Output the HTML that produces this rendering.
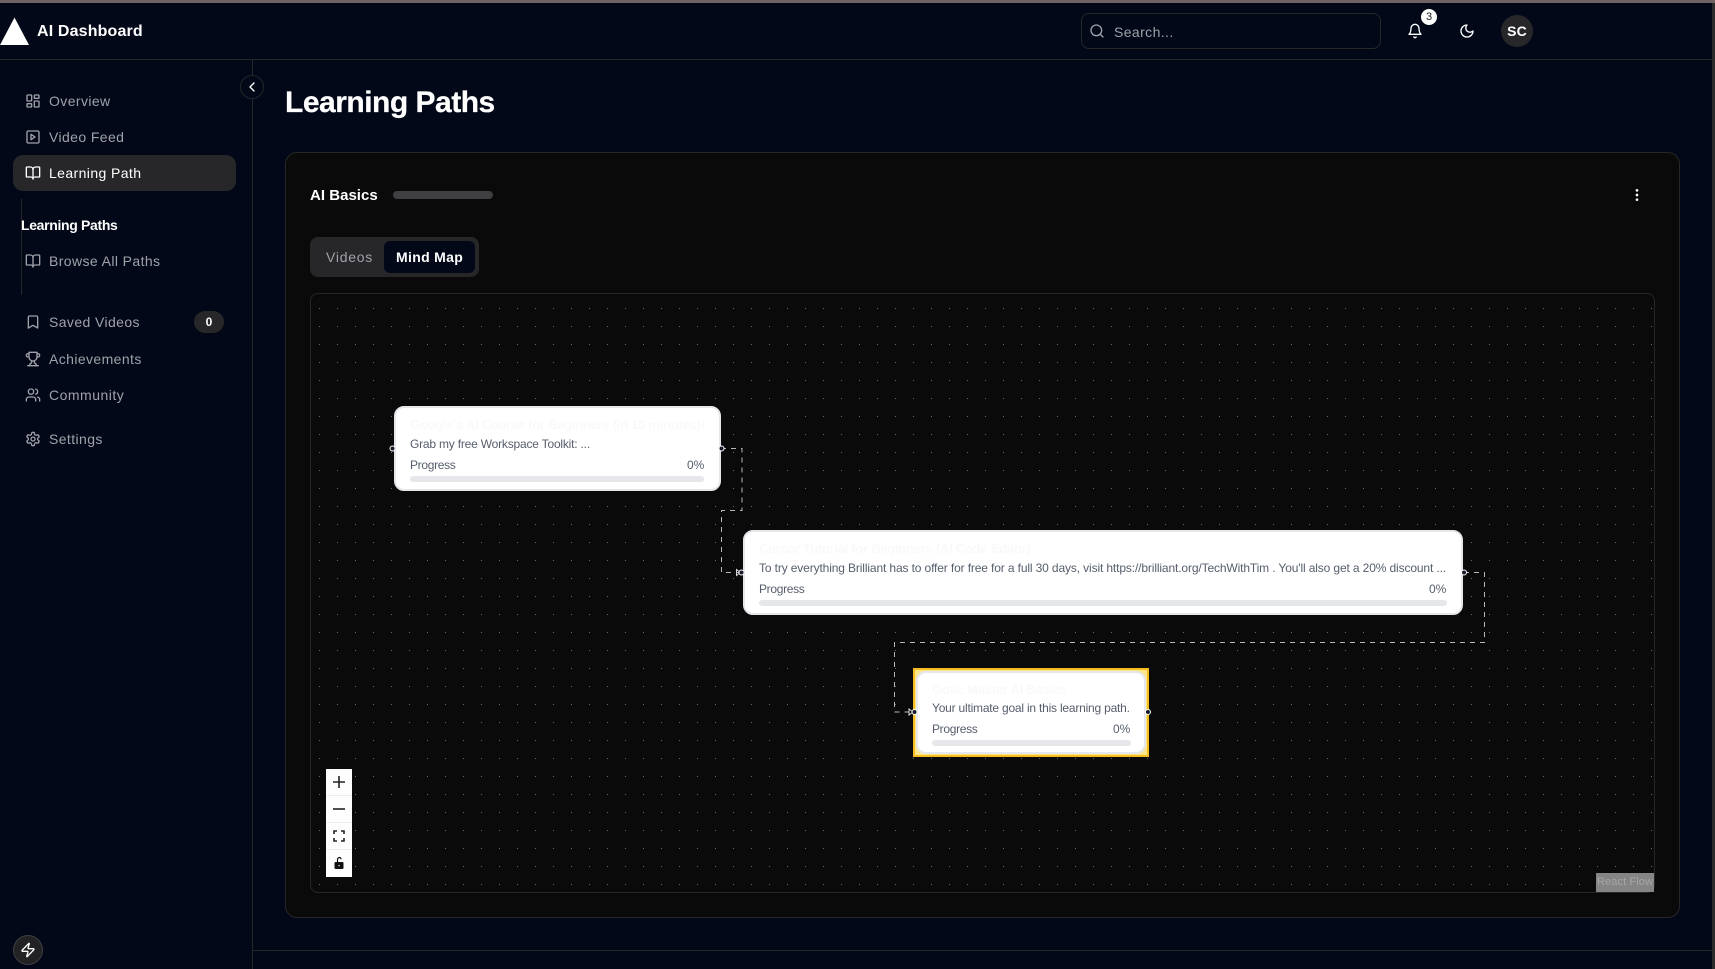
<!DOCTYPE html>
<html lang="en">
<head>
<meta charset="utf-8">
<title>Learning Paths</title>
<style>
*{box-sizing:border-box;margin:0;padding:0}
html,body{width:1715px;height:969px;overflow:hidden;background:#020817;font-family:"Liberation Sans",sans-serif;color:#fff}
.a{position:absolute}
.t{position:absolute;white-space:nowrap;line-height:20px;height:20px}
.nav{font-size:14px;color:#a1a1aa;left:49px;letter-spacing:.4px}
svg.i{position:absolute;fill:none;stroke:currentColor;stroke-width:2;stroke-linecap:round;stroke-linejoin:round;width:16px;height:16px}
.g{color:#a1a1aa}
.node{position:absolute;background:#fff;border:2px solid #e5e7eb;border-radius:10px}
.nt{position:absolute;white-space:nowrap;font-size:13px;font-weight:700;color:#f9f9fa;line-height:20px;letter-spacing:-.26px}
.nd{position:absolute;white-space:nowrap;font-size:12px;color:#565e6c;line-height:16px;letter-spacing:-.13px}
.pr{letter-spacing:-.32px}
.pc{letter-spacing:0}
.bar{position:absolute;height:6px;background:#e5e7eb;border-radius:3px}
.ctl{position:absolute;left:326px;width:26px;height:27px;background:#fefefe;border-bottom:1px solid #eee}
.ctl svg{position:absolute;left:6px;top:6px;width:14px;height:14px}
</style>
</head>
<body>
<div class="a" style="left:0;top:0;width:1715px;height:3px;background:#6f6363"></div>

<!-- header -->
<div class="a" style="left:0;top:59px;width:1712px;height:1px;background:#27272a"></div>
<svg class="a" style="left:0;top:17px;width:30px;height:29px"><polygon points="14.5,0.5 29,28 0,28" fill="#fff"/></svg>
<div class="t" style="left:37px;top:22px;font-size:16px;font-weight:700;letter-spacing:.15px">AI Dashboard</div>

<div class="a" style="left:1081px;top:13px;width:300px;height:36px;border:1px solid #27272a;border-radius:8px"></div>
<svg class="i g" style="left:1089px;top:23px" viewBox="0 0 24 24"><circle cx="11" cy="11" r="8"/><path d="m21 21-4.3-4.3"/></svg>
<div class="t" style="left:1114px;top:22px;font-size:14px;color:#a1a1aa;letter-spacing:.4px">Search...</div>
<svg class="i" style="left:1407px;top:23px" viewBox="0 0 24 24"><path d="M6 8a6 6 0 0 1 12 0c0 7 3 9 3 9H3s3-2 3-9"/><path d="M10.3 21a1.94 1.94 0 0 0 3.4 0"/></svg>
<div class="a" style="left:1421px;top:9px;width:16px;height:16px;border-radius:50%;background:#fff;color:#18181b;font-size:11px;line-height:16px;text-align:center">3</div>
<svg class="i" style="left:1459px;top:23px" viewBox="0 0 24 24"><path d="M12 3a6 6 0 0 0 9 9 9 9 0 1 1-9-9Z"/></svg>
<div class="a" style="left:1501px;top:15px;width:32px;height:32px;border-radius:50%;background:#27272a;font-size:14px;font-weight:700;line-height:32px;text-align:center;letter-spacing:.2px">SC</div>

<!-- sidebar -->
<div class="a" style="left:252px;top:60px;width:1px;height:909px;background:#27272a"></div>
<div class="a" style="left:240px;top:75px;width:24px;height:24px;border-radius:50%;background:#020817;border:1px solid #27272a"></div>
<svg class="i" style="left:244px;top:79px" viewBox="0 0 24 24"><path d="m15 18-6-6 6-6"/></svg>

<svg class="i g" style="left:25px;top:93px" viewBox="0 0 24 24"><rect x="3" y="3" width="7" height="9" rx="1"/><rect x="14" y="3" width="7" height="5" rx="1"/><rect x="14" y="12" width="7" height="9" rx="1"/><rect x="3" y="16" width="7" height="5" rx="1"/></svg>
<div class="t nav" style="top:91px">Overview</div>
<svg class="i g" style="left:25px;top:129px" viewBox="0 0 24 24"><rect x="3" y="3" width="18" height="18" rx="2"/><path d="m9 8 6 4-6 4Z"/></svg>
<div class="t nav" style="top:127px">Video Feed</div>

<div class="a" style="left:13px;top:155px;width:223px;height:36px;background:#27272a;border-radius:10px"></div>
<svg class="i" style="left:25px;top:165px" viewBox="0 0 24 24"><path d="M12 7v14"/><path d="M3 18a1 1 0 0 1-1-1V4a1 1 0 0 1 1-1h5a4 4 0 0 1 4 4 4 4 0 0 1 4-4h5a1 1 0 0 1 1 1v13a1 1 0 0 1-1 1h-6a3 3 0 0 0-3 3 3 3 0 0 0-3-3z"/></svg>
<div class="t nav" style="top:163px;color:#fff">Learning Path</div>

<div class="a" style="left:21px;top:199px;width:1px;height:96px;background:#27272a"></div>
<div class="t" style="left:21px;top:215px;font-size:14px;font-weight:700;letter-spacing:-.33px">Learning Paths</div>
<svg class="i g" style="left:25px;top:253px" viewBox="0 0 24 24"><path d="M12 7v14"/><path d="M3 18a1 1 0 0 1-1-1V4a1 1 0 0 1 1-1h5a4 4 0 0 1 4 4 4 4 0 0 1 4-4h5a1 1 0 0 1 1 1v13a1 1 0 0 1-1 1h-6a3 3 0 0 0-3 3 3 3 0 0 0-3-3z"/></svg>
<div class="t nav" style="top:251px">Browse All Paths</div>

<svg class="i g" style="left:25px;top:314px" viewBox="0 0 24 24"><path d="m19 21-7-4-7 4V5a2 2 0 0 1 2-2h10a2 2 0 0 1 2 2v16z"/></svg>
<div class="t nav" style="top:312px">Saved Videos</div>
<div class="a" style="left:194px;top:311px;width:30px;height:22px;border-radius:11px;background:#27272a;font-size:12px;font-weight:700;line-height:22px;text-align:center">0</div>

<svg class="i g" style="left:25px;top:351px" viewBox="0 0 24 24"><path d="M6 9H4.5a2.5 2.5 0 0 1 0-5H6"/><path d="M18 9h1.5a2.5 2.5 0 0 0 0-5H18"/><path d="M4 22h16"/><path d="M10 14.66V17c0 .55-.47.98-.97 1.21C7.85 18.75 7 20.24 7 22"/><path d="M14 14.66V17c0 .55.47.98.97 1.21C16.15 18.75 17 20.24 17 22"/><path d="M18 2H6v7a6 6 0 0 0 12 0V2Z"/></svg>
<div class="t nav" style="top:349px">Achievements</div>
<svg class="i g" style="left:25px;top:387px" viewBox="0 0 24 24"><path d="M16 21v-2a4 4 0 0 0-4-4H6a4 4 0 0 0-4 4v2"/><circle cx="9" cy="7" r="4"/><path d="M22 21v-2a4 4 0 0 0-3-3.87"/><path d="M16 3.13a4 4 0 0 1 0 7.75"/></svg>
<div class="t nav" style="top:385px;letter-spacing:.5px">Community</div>
<svg class="i g" style="left:25px;top:431px" viewBox="0 0 24 24"><path d="M12.22 2h-.44a2 2 0 0 0-2 2v.18a2 2 0 0 1-1 1.73l-.43.25a2 2 0 0 1-2 0l-.15-.08a2 2 0 0 0-2.73.73l-.22.38a2 2 0 0 0 .73 2.73l.15.1a2 2 0 0 1 1 1.72v.51a2 2 0 0 1-1 1.74l-.15.09a2 2 0 0 0-.73 2.73l.22.38a2 2 0 0 0 2.73.73l.15-.08a2 2 0 0 1 2 0l.43.25a2 2 0 0 1 1 1.73V20a2 2 0 0 0 2 2h.44a2 2 0 0 0 2-2v-.18a2 2 0 0 1 1-1.73l.43-.25a2 2 0 0 1 2 0l.15.08a2 2 0 0 0 2.73-.73l.22-.39a2 2 0 0 0-.73-2.73l-.15-.08a2 2 0 0 1-1-1.74v-.5a2 2 0 0 1 1-1.74l.15-.09a2 2 0 0 0 .73-2.73l-.22-.38a2 2 0 0 0-2.73-.73l-.15.08a2 2 0 0 1-2 0l-.43-.25a2 2 0 0 1-1-1.73V4a2 2 0 0 0-2-2z"/><circle cx="12" cy="12" r="3"/></svg>
<div class="t nav" style="top:429px">Settings</div>

<div class="a" style="left:13px;top:935px;width:30px;height:30px;border-radius:50%;background:#222224;border:1px solid #3f3f46"></div>
<svg class="i" style="left:20px;top:942px" viewBox="0 0 24 24"><path d="M4 14a1 1 0 0 1-.78-1.63l9.9-10.2a.5.5 0 0 1 .86.46l-1.92 6.02A1 1 0 0 0 13 10h7a1 1 0 0 1 .78 1.63l-9.9 10.2a.5.5 0 0 1-.86-.46l1.92-6.02A1 1 0 0 0 11 14z"/></svg>

<!-- main -->
<div class="a" style="left:253px;top:950px;width:1459px;height:1px;background:#27272a"></div>
<div class="a" style="left:1712px;top:3px;width:3px;height:966px;background:#2b2b2b"></div>

<div class="t" style="left:285px;top:83px;height:40px;line-height:40px;font-size:30px;font-weight:700;letter-spacing:-.5px;-webkit-text-stroke:.25px #fff">Learning Paths</div>

<div class="a" style="left:285px;top:152px;width:1395px;height:766px;background:#0a0a0b;border:1px solid #27272a;border-radius:12px"></div>
<div class="t" style="left:310px;top:186px;font-size:15px;font-weight:700;letter-spacing:.02px">AI Basics</div>
<div class="a" style="left:393px;top:191px;width:100px;height:8px;border-radius:4px;background:#3f3f42"></div>
<svg class="i" style="left:1629px;top:187px" viewBox="0 0 24 24"><circle cx="12" cy="12" r="1"/><circle cx="12" cy="5" r="1"/><circle cx="12" cy="19" r="1"/></svg>

<div class="a" style="left:310px;top:237px;width:169px;height:40px;background:#27272a;border-radius:8px"></div>
<div class="t" style="left:326px;top:247px;font-size:14px;color:#a1a1aa;letter-spacing:.75px">Videos</div>
<div class="a" style="left:384px;top:241px;width:91px;height:32px;background:#020817;border-radius:6px"></div>
<div class="t" style="left:396px;top:247px;font-size:14px;font-weight:700;letter-spacing:.32px">Mind Map</div>

<!-- flow -->
<div class="a" style="left:310px;top:293px;width:1345px;height:600px;background:#0a0a0b;border:1px solid #27272a;border-radius:8px;overflow:hidden"></div>
<svg class="a" style="left:311px;top:294px;width:1343px;height:598px" viewBox="311 294 1343 598">
<defs><pattern id="d" x="311" y="300" width="18" height="18" patternUnits="userSpaceOnUse"><rect x="8" y="8" width="1" height="1" fill="#68686c"/></pattern></defs>
<rect x="311" y="294" width="1343" height="598" fill="url(#d)"/>
<g fill="none" stroke="#b8b8bc" stroke-width="1" stroke-dasharray="5 5">
<path d="M721 448.5H742V510.5H721.5V572.5H742"/>
<path d="M1464 572.5H1484.5V642.5H894.5V712H914"/>
</g>
<g fill="none" stroke="#d8d8dc" stroke-width="1"><path d="M736.5 569.5 740.5 572.5 736.5 575.5V569.5Z"/><path d="M909 709 913 712 909 715V709Z"/></g>
</svg>

<div class="node" style="left:394px;top:406px;width:327px;height:85px"></div>
<div class="nt" style="left:410px;top:415px">Google's AI Course for Beginners (in 10 minutes)!</div>
<div class="nd" style="left:410px;top:436px;letter-spacing:-.2px">Grab my free Workspace Toolkit: ...</div>
<div class="nd pr" style="left:410px;top:457px">Progress</div>
<div class="nd pc" style="left:687px;top:457px">0%</div>
<div class="bar" style="left:410px;top:476px;width:294px"></div>

<div class="node" style="left:743px;top:530px;width:720px;height:85px"></div>
<div class="nt" style="left:759px;top:539px">Cursor Tutorial for Beginners (AI Code Editor)</div>
<div class="nd" style="left:759px;top:560px">To try everything Brilliant has to offer for free for a full 30 days, visit https://brilliant.org/TechWithTim . You'll also get a 20% discount ...</div>
<div class="nd pr" style="left:759px;top:581px">Progress</div>
<div class="nd pc" style="left:1429px;top:581px">0%</div>
<div class="bar" style="left:759px;top:600px;width:688px"></div>

<div class="a" style="left:913px;top:668px;width:236px;height:89px;background:#fde68a;border:2px solid #f5bd1f"></div>
<div class="node" style="left:916px;top:671px;width:230px;height:83px;border-radius:10px"></div>
<div class="nt" style="left:932px;top:680px">Goal: Master AI Basics</div>
<div class="nd" style="left:932px;top:700px;letter-spacing:-.21px">Your ultimate goal in this learning path.</div>
<div class="nd pr" style="left:932px;top:721px">Progress</div>
<div class="nd pc" style="left:1113px;top:721px">0%</div>
<div class="bar" style="left:932px;top:740px;width:199px"></div>

<svg class="a" style="left:385px;top:400px;width:1100px;height:330px" viewBox="385 400 1100 330">
<g fill="#1a192b" stroke="#fff" stroke-width="1">
<circle cx="392.5" cy="448.5" r="2.5"/><circle cx="721.5" cy="448.5" r="2.5"/>
<circle cx="741.5" cy="572.5" r="2.5"/><circle cx="1464" cy="572.5" r="2.5"/>
<circle cx="914.5" cy="712" r="2.5"/><circle cx="1148" cy="712" r="2.5"/>
</g>
</svg>

<!-- controls -->
<div class="ctl" style="top:769px"><svg viewBox="0 0 14 14"><path d="M7 1v12M1 7h12" stroke="#222" stroke-width="1.6"/></svg></div>
<div class="ctl" style="top:796px"><svg viewBox="0 0 14 14"><path d="M1 7h12" stroke="#222" stroke-width="1.6"/></svg></div>
<div class="ctl" style="top:823px"><svg viewBox="0 0 14 14"><path d="M2 5V2h3M9 2h3v3M12 9v3H9M5 12H2V9" fill="none" stroke="#222" stroke-width="1.6"/></svg></div>
<div class="ctl" style="top:850px;height:27px;border:0"><svg viewBox="0 0 14 14"><path d="M5.500 6V3.500a2 2 0 0 1 2.800-1.800l1 1.500" fill="none" stroke="#111" stroke-width="1.200"/><rect x="2.500" y="6" width="9" height="7" rx="1" fill="#111"/><rect x="6.500" y="9" width="1.200" height="1.200" fill="#fff"/></svg></div>

<div class="a" style="left:1596px;top:873px;width:58px;height:19px;background:#858585;color:#a6a6a6;font-size:11px;line-height:19px;text-align:center;white-space:nowrap;letter-spacing:.1px">React Flow</div>
</body>
</html>
